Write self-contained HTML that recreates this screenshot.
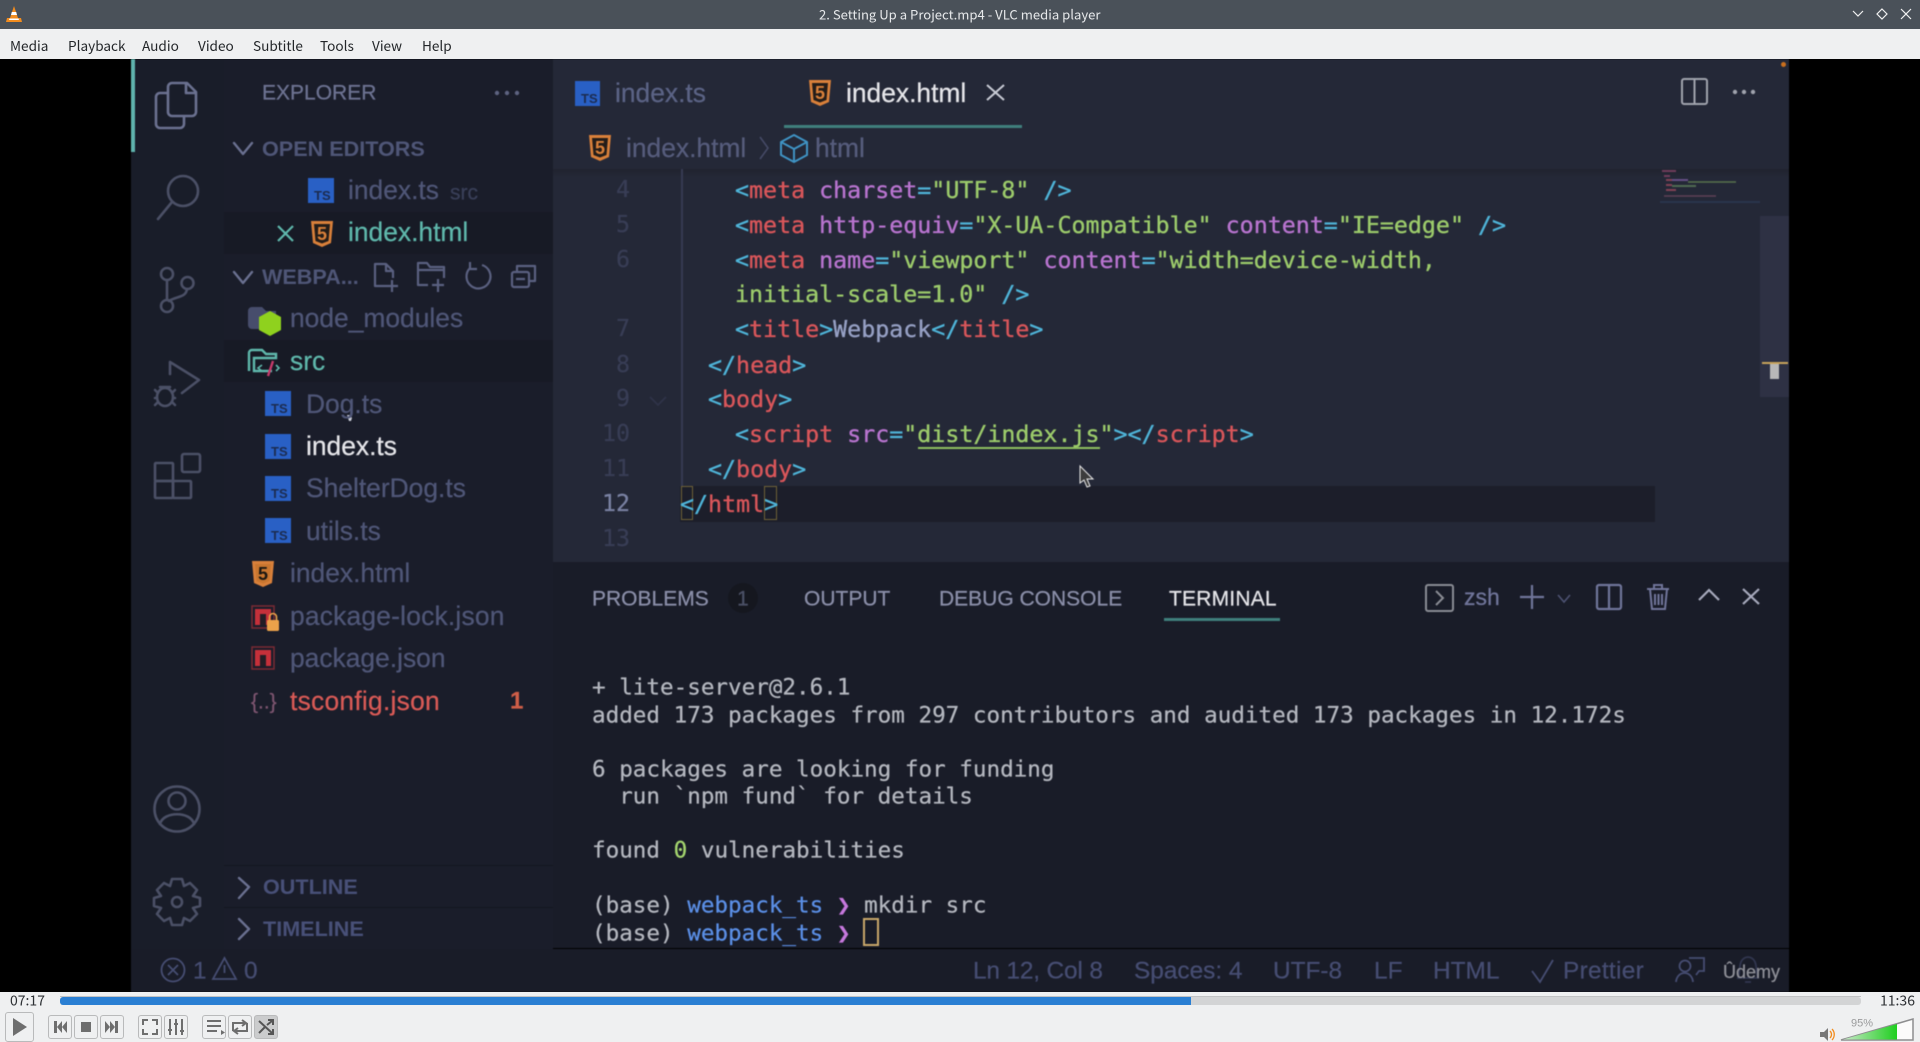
<!DOCTYPE html>
<html lang="en"><head><meta charset="utf-8"><title>2. Setting Up a Project.mp4 - VLC media player</title>
<style>
html,body{margin:0;padding:0;width:1920px;height:1042px;overflow:hidden;background:#eff0f1}
#v{position:absolute;left:0;top:59px;width:1920px;height:933px;background:#000;overflow:hidden}
#vi{position:absolute;left:0;top:-59px;width:1920px;height:1042px;filter:blur(.55px)}
.b{position:absolute}
svg{position:absolute;left:0;top:0}
.t{position:absolute;transform:translateY(-50%);white-space:pre;line-height:1.2;font-family:"Liberation Sans",sans-serif;color:#4f5677;font-size:26.4px;-webkit-text-stroke:.25px currentColor}
.h{font-size:21.6px;font-weight:bold;-webkit-text-stroke:0}
.c{font-family:"DejaVu Sans Mono","Liberation Mono",monospace;font-size:23.29px;color:#8fc46a;margin-top:.5px;-webkit-text-stroke:.35px currentColor}
.c span{-webkit-text-stroke:.35px currentColor}
.n{font-family:"DejaVu Sans Mono","Liberation Mono",monospace;font-size:23.3px;color:#383d55;text-align:right;width:60px}
.m{font-family:"DejaVu Sans Mono","Liberation Mono",monospace;font-size:22.6px;color:#b4b7bf;margin-top:1px}
.p{color:#4fb4d8}.r{color:#d9565a}.a{color:#b874cf}.s{color:#9ccb6b}.w{color:#96a0c4}
.pt{font-size:21px;color:#8a8ea8;margin-top:1px}
.st{font-size:24.4px;color:#464d72}
.u{position:absolute;transform:translateY(-50%);white-space:pre;line-height:1.2;font-family:"Noto Sans CJK JP","Liberation Sans",sans-serif;font-size:13.6px;color:#232629}
.btn{position:absolute;box-sizing:border-box;border:1px solid #b9babb;border-radius:3px;height:24px;width:24px;background:#eff0f1}
</style></head><body>
<div class="b" style="left:0;top:0;width:1920px;height:29px;background:#4a5159"></div>
<div class="b" style="left:0;top:29px;width:1920px;height:30px;background:#eff0f1"></div>

<div id="v"><div id="vi">
<div class="b" style="left:131px;top:59px;width:93px;height:933px;background:#191d29"></div>
<div class="b" style="left:224px;top:59px;width:329px;height:933px;background:#1a1d2a"></div>
<div class="b" style="left:553px;top:59px;width:1236px;height:503px;background:#242837"></div>
<div class="b" style="left:553px;top:562px;width:1236px;height:386px;background:#191c28"></div>
<div class="b" style="left:131px;top:949px;width:1658px;height:43px;background:#191c28"></div>
<div class="b" style="left:131px;top:59px;width:4px;height:93px;background:#5fb3ad"></div>
<div class="b" style="left:224px;top:212px;width:329px;height:42px;background:#171a25"></div>
<div class="b" style="left:224px;top:340px;width:329px;height:42px;background:#171a25"></div>
<div class="b" style="left:224px;top:865px;width:329px;height:1px;background:#14161f"></div>
<div class="b" style="left:224px;top:907px;width:329px;height:1px;background:#14161f"></div>
<div class="b" style="left:680px;top:486px;width:975px;height:36px;background:#1c1e2a"></div>
<div class="b" style="left:553px;top:169px;width:1236px;height:8px;background:linear-gradient(#20232f,#242837)"></div>
<div class="b" style="left:681px;top:169px;width:2px;height:317px;background:#363a52"></div>
<div class="b" style="left:681px;top:486px;width:12px;height:34px;box-sizing:border-box;border:1px solid #6e6136"></div>
<div class="b" style="left:764px;top:486px;width:13px;height:34px;box-sizing:border-box;border:1px solid #6e6136"></div>
<div class="b" style="left:918px;top:447px;width:182px;height:2px;background:#8fbf5f"></div>
<div class="b" style="left:784px;top:125px;width:238px;height:3px;background:#3f7f7c"></div>
<div class="b" style="left:1164px;top:618px;width:116px;height:3px;background:#3f7f7c"></div>
<div class="b" style="left:1760px;top:216px;width:29px;height:181px;background:#2e3144"></div>
<div class="b" style="left:1762px;top:362px;width:26px;height:2px;background:#c9a45a"></div>
<div class="b" style="left:1770px;top:364px;width:9px;height:15px;background:#b8b8b8"></div>
<div class="b" style="left:1781px;top:62px;width:5px;height:5px;border-radius:50%;background:#c96f1e"></div>

<svg width="1920" height="1042" viewBox="0 0 1920 1042" fill="none">
<!-- activity bar -->
<g stroke="#6b7190" stroke-width="2.6" stroke-linejoin="round">
<path d="M168 93H160a4 4 0 0 0-4 4V124a4 4 0 0 0 4 4H180a4 4 0 0 0 4-4V116"/>
<path d="M172 83H187L196 92V112a4 4 0 0 1-4 4H172a4 4 0 0 1-4-4V87a4 4 0 0 1 4-4Z"/>
<path d="M186 83V93H196"/>
</g>
<g stroke="#4b5066" stroke-width="2.6" stroke-linecap="round" stroke-linejoin="round">
<circle cx="183" cy="191" r="15"/><path d="M172 202L158 219"/>
<circle cx="167" cy="274" r="6"/><circle cx="187.5" cy="283" r="6"/><circle cx="167" cy="306" r="6"/>
<path d="M167 280V300M187 289C186 298 176 296 169 301"/>
<path d="M170 362L199 380L182 393M170 362V374"/>
<ellipse cx="165" cy="397" rx="8" ry="9"/>
<path d="M155 390L158 393M155 398H157M155 405L158 402M175 390L172 393M175 398H173M175 405L172 402M160 387L170 387"/>
<rect x="182" y="454" width="18" height="18" rx="2"/>
<rect x="155" y="463" width="18" height="18" rx="1"/>
<rect x="155" y="481" width="18" height="17" rx="1"/>
<rect x="173" y="481" width="18" height="17" rx="1"/>
<circle cx="177" cy="809" r="22.5"/><circle cx="177" cy="801" r="8.5"/>
<path d="M160 824C163 811 191 811 194 824"/>
<circle cx="177" cy="902" r="5"/>
<path d="M172 879H182L184 886L190 883L197 890L193 896L200 898V906L193 908L197 914L190 921L184 918L182 925H172L170 918L164 921L157 914L161 908L154 906V898L161 896L157 890L164 883L170 886Z"/>
</g>
<!-- sidebar chevrons -->
<g stroke="#6a7090" stroke-width="2.4" stroke-linecap="round" stroke-linejoin="round">
<path d="M234 143L243 154L252 143M234 272L243 283L252 272"/>
<path d="M239 878L249 887L239 898M239 919L249 929L239 939"/>
</g>
<g fill="#5d6380"><circle cx="497" cy="93" r="2.2"/><circle cx="507" cy="93" r="2.2"/><circle cx="517" cy="93" r="2.2"/></g>
<!-- selected close -->
<path d="M278 226L293 241M293 226L278 241" stroke="#5fb8ac" stroke-width="2.2"/>
<!-- explorer actions -->
<g stroke="#5a6080" stroke-width="2.2" stroke-linejoin="round">
<path d="M386 286H375V264H386L393 271V278M386 264V271H393"/><path d="M392 280V292M386 286H398"/>
<path d="M428 285H418V263H427L430 267H444V278M418 270H444"/><path d="M438 279V292M432 285H444"/>
<path d="M482 265A12 12 0 1 1 470 268M470 262V269H477"/>
<rect x="512" y="272" width="17" height="15" rx="2"/><path d="M517 272V266H535V281H529M516 279H525"/>
</g>
<!-- TS icons -->
<g font-family="Liberation Sans,sans-serif" font-weight="bold" font-size="13" fill="#1c2c50">
<rect x="308" y="178" width="26" height="25" fill="#2960c5"/><text x="314" y="200">TS</text>
<rect x="265" y="391" width="26" height="25" fill="#2960c5"/><text x="271" y="413">TS</text>
<rect x="265" y="434" width="26" height="25" fill="#2960c5"/><text x="271" y="456">TS</text>
<rect x="265" y="476" width="26" height="25" fill="#2960c5"/><text x="271" y="498">TS</text>
<rect x="265" y="518" width="26" height="25" fill="#2960c5"/><text x="271" y="540">TS</text>
<rect x="575" y="81" width="25" height="25" fill="#2960c5"/><text x="581" y="103">TS</text>
</g>
<!-- html5 icons -->
<g font-family="Liberation Sans,sans-serif" font-weight="bold" font-size="18" fill="#1a1712">
<path d="M311 221H333L331 243L322 247L313 243Z" fill="#d9803a"/><path d="M314 224H330L328.500 241L322 243.500L315.500 241Z" fill="#241d19"/><text x="317" y="240" fill="#d9803a">5</text>
<path d="M252 561H274L272 583L263 587L254 583Z" fill="#d9803a"/><path d="M255 564H271L269.500 581L263 583.500L256.500 581Z" fill="#c9762f"/><text x="258" y="580">5</text>
<path d="M809 80H831L829 102L820 106L811 102Z" fill="#d9803a"/><path d="M812 83H828L826.500 100L820 102.500L813.500 100Z" fill="#241d19"/><text x="815" y="99" fill="#d9803a">5</text>
<path d="M589 135H611L609 157L600 161L591 157Z" fill="#d9803a"/><path d="M592 138H608L606.500 155L600 157.500L593.500 155Z" fill="#241d19"/><text x="595" y="154" fill="#d9803a">5</text>
</g>
<!-- folders -->
<path d="M248 311a4 4 0 0 1 4-4H262L266 311H276V329H252a4 4 0 0 1-4-4Z" fill="#474d6c"/>
<path d="M270 311L281 317V330L270 336L259 330V317Z" fill="#8fd11e"/>
<path d="M249 371V353a3 3 0 0 1 3-3H262L266 354H276V358H254V371H272" stroke="#5fb8ac" stroke-width="2.4"/>
<path d="M262 365L258 368L262 371M276 365L279 368L276 371" stroke="#5fb8ac" stroke-width="1.6"/>
<path d="M273 361L268 376" stroke="#c73b6b" stroke-width="2.4"/>
<!-- npm -->
<rect x="252" y="606" width="22" height="22" stroke="#7a2a33" stroke-width="1.5"/><rect x="255" y="609" width="16" height="16" fill="#c6303a"/><rect x="260" y="614" width="6" height="11" fill="#241d25"/>
<rect x="267" y="620" width="12" height="11" rx="1.5" fill="#eba24a"/><path d="M269.500 620V617a3.500 3.500 0 0 1 7 0V620" stroke="#eba24a" stroke-width="1.6"/>
<rect x="252" y="647" width="22" height="22" stroke="#7a2a33" stroke-width="1.5"/><rect x="255" y="650" width="16" height="16" fill="#c6303a"/><rect x="260" y="655" width="6" height="11" fill="#241d25"/>
<!-- editor actions -->
<rect x="1682" y="79" width="25" height="25" rx="2" stroke="#a0a3ad" stroke-width="2"/><path d="M1694.500 79V104" stroke="#a0a3ad" stroke-width="2"/>
<g fill="#a0a3ad"><circle cx="1735" cy="92" r="2.2"/><circle cx="1744" cy="92" r="2.2"/><circle cx="1753" cy="92" r="2.2"/></g>
<path d="M987 85L1004 100M1004 85L987 100" stroke="#c9ccd6" stroke-width="2"/>
<path d="M760 137L768 148L760 159" stroke="#454a66" stroke-width="1.6"/>
<g stroke="#3f93c4" stroke-width="2" stroke-linejoin="round"><path d="M794 135L807 142V155L794 162L781 155V142Z"/><path d="M781 142L794 149L807 142M794 149V162"/></g>
<!-- folding chevron -->
<path d="M650 397L658 405L666 397" stroke="#2f3349" stroke-width="1.6"/>
<!-- mouse cursor -->
<path d="M1080 466V483L1084 480L1087 487L1090 486L1087 479L1093 479Z" fill="#3c3c3c" stroke="#e8e8e8" stroke-width="1"/>
<path d="M1031 415l3 0 2 3 -1 3 -2 0Z" fill="#c9ccd6" transform="translate(-684 0)"/>
<!-- minimap -->
<g stroke-width="2" opacity=".75">
<path d="M1662 171H1676M1664 176H1670" stroke="#8a4468"/>
<path d="M1666 180H1672M1666 185H1672M1666 190H1676" stroke="#a04a60"/>
<path d="M1672 180H1688" stroke="#7a5aa0"/><path d="M1688 182H1736" stroke="#6a8a55" stroke-width="1.4"/><path d="M1672 186H1696" stroke="#5f7f5a"/>
<path d="M1664 196H1716" stroke="#704860" stroke-width="1.4"/>
<path d="M1660 202H1760" stroke="#2c3a55"/>
</g>
<!-- terminal toolbar -->
<rect x="1426" y="585" width="27" height="26" rx="2" stroke="#8a8c94" stroke-width="2"/><path d="M1436 591L1443 598L1436 605" stroke="#8a8c94" stroke-width="2"/>
<g stroke="#70759a" stroke-width="2.2">
<path d="M1532 585V609M1520 597H1544"/>
<path d="M1558 595L1564 602L1570 595" stroke-width="1.6" stroke="#4d5272"/>
<rect x="1597" y="585" width="24" height="24" rx="2"/><path d="M1609 585V609"/>
<path d="M1647 589H1669M1654 589V585H1662V589M1650 589L1652 609H1665L1667 589M1655 594V605M1658.500 594V605M1662 594V605" stroke-width="2"/>
</g>
<path d="M1699 600L1709 590L1719 600M1743 589L1759 604M1759 589L1743 604" stroke="#a7aabd" stroke-width="2.2"/>
<!-- terminal cursor -->
<rect x="864" y="919" width="14" height="26" stroke="#c9a86a" stroke-width="2"/>
<circle cx="743" cy="598" r="15" fill="#15171f"/>
<!-- status -->
<g stroke="#464d72" stroke-width="1.8">
<circle cx="173" cy="970" r="11.5"/><path d="M168 965L178 975M178 965L168 975"/>
<path d="M224.500 958L236 979H213Z"/><path d="M224.500 965V973"/>
<path d="M1532 971L1540 982L1553 960"/>
<circle cx="1685" cy="966" r="5.500"/><path d="M1676 982C1677 970 1692 970 1693 982M1689 958H1704V971H1699L1696 975"/>
<path d="M1738 978C1741 972 1737 958 1748 957C1759 958 1755 972 1758 978ZM1745 982H1751" stroke="#31364f"/>
</g>
</svg>

<!-- sidebar text -->
<div class="t" style="left:262px;top:93px;font-size:21px;color:#6c7291">EXPLORER</div>
<div class="t h" style="left:262px;top:149px">OPEN EDITORS</div>
<div class="t" style="left:348px;top:191px">index.ts</div>
<div class="t" style="left:450px;top:193px;font-size:21px;color:#393f58">src</div>
<div class="t" style="left:348px;top:233px;color:#5fb8ac">index.html</div>
<div class="t h" style="left:262px;top:277px">WEBPA...</div>
<div class="t" style="left:290px;top:319px">node_modules</div>
<div class="t" style="left:290px;top:362px;color:#5fb8ac">src</div>
<div class="t" style="left:306px;top:405px">Dog.ts</div>
<div class="t" style="left:306px;top:447px;color:#e6e6ea">index.ts</div>
<div class="t" style="left:306px;top:489px">ShelterDog.ts</div>
<div class="t" style="left:306px;top:532px">utils.ts</div>
<div class="t" style="left:290px;top:574px">index.html</div>
<div class="t" style="left:290px;top:617px;letter-spacing:.2px">package-lock.json</div>
<div class="t" style="left:290px;top:659px">package.json</div>
<div class="t" style="left:251px;top:702px;font-size:21px;color:#7d5570">{..}</div>
<div class="t" style="left:290px;top:702px;color:#d95a56;letter-spacing:.25px">tsconfig.json</div>
<div class="t" style="left:510px;top:702px;color:#cf5e48;font-weight:bold;font-size:24px">1</div>
<div class="t h" style="left:263px;top:887px;color:#485078">OUTLINE</div>
<div class="t h" style="left:263px;top:929px;color:#485078">TIMELINE</div>
<!-- tabs -->
<div class="t" style="left:615px;top:94px;color:#5b6385">index.ts</div>
<div class="t" style="left:846px;top:94px;color:#e6e6ea">index.html</div>
<div class="t" style="left:626px;top:149px;color:#565c7c">index.html</div>
<div class="t" style="left:815px;top:149px;color:#565c7c">html</div>
<!-- code -->
<div class="t n" style="left:570px;top:190px">4</div>
<div class="t n" style="left:570px;top:225px">5</div>
<div class="t n" style="left:570px;top:260px">6</div>
<div class="t n" style="left:570px;top:329px">7</div>
<div class="t n" style="left:570px;top:365px">8</div>
<div class="t n" style="left:570px;top:399px">9</div>
<div class="t n" style="left:570px;top:434px">10</div>
<div class="t n" style="left:570px;top:469px">11</div>
<div class="t n" style="left:570px;top:504px;color:#7a82a3">12</div>
<div class="t n" style="left:570px;top:539px">13</div>
<div class="t c" style="left:735px;top:190px"><span class="p">&lt;</span><span class="r">meta</span> <span class="a">charset</span><span class="p">=</span><span class="s">"UTF-8"</span> <span class="p">/&gt;</span></div>
<div class="t c" style="left:735px;top:225px"><span class="p">&lt;</span><span class="r">meta</span> <span class="a">http-equiv</span><span class="p">=</span><span class="s">"X-UA-Compatible"</span> <span class="a">content</span><span class="p">=</span><span class="s">"IE=edge"</span> <span class="p">/&gt;</span></div>
<div class="t c" style="left:735px;top:260px"><span class="p">&lt;</span><span class="r">meta</span> <span class="a">name</span><span class="p">=</span><span class="s">"viewport"</span> <span class="a">content</span><span class="p">=</span><span class="s">"width=device-width,</span></div>
<div class="t c" style="left:735px;top:294px"><span class="s">initial-scale=1.0"</span> <span class="p">/&gt;</span></div>
<div class="t c" style="left:735px;top:329px"><span class="p">&lt;</span><span class="r">title</span><span class="p">&gt;</span><span class="w">Webpack</span><span class="p">&lt;/</span><span class="r">title</span><span class="p">&gt;</span></div>
<div class="t c" style="left:708px;top:365px"><span class="p">&lt;/</span><span class="r">head</span><span class="p">&gt;</span></div>
<div class="t c" style="left:708px;top:399px"><span class="p">&lt;</span><span class="r">body</span><span class="p">&gt;</span></div>
<div class="t c" style="left:735px;top:434px"><span class="p">&lt;</span><span class="r">script</span> <span class="a">src</span><span class="p">=</span><span class="s">"dist/index.js"</span><span class="p">&gt;&lt;/</span><span class="r">script</span><span class="p">&gt;</span></div>
<div class="t c" style="left:708px;top:469px"><span class="p">&lt;/</span><span class="r">body</span><span class="p">&gt;</span></div>
<div class="t c" style="left:680px;top:504px"><span class="p">&lt;/</span><span class="r">html</span><span class="p">&gt;</span></div>
<!-- panel -->
<div class="t pt" style="left:592px;top:598px">PROBLEMS</div>
<div class="t pt" style="left:737px;top:598px;color:#4b5066">1</div>
<div class="t pt" style="left:804px;top:598px">OUTPUT</div>
<div class="t pt" style="left:939px;top:598px">DEBUG CONSOLE</div>
<div class="t pt" style="left:1169px;top:598px;color:#e4e4e8;letter-spacing:.2px">TERMINAL</div>
<div class="t" style="left:1464px;top:598px;font-size:23px;color:#70759a">zsh</div>
<!-- terminal -->
<div class="t m" style="left:592px;top:687px">+ lite-server@2.6.1</div>
<div class="t m" style="left:592px;top:715px">added 173 packages from 297 contributors and audited 173 packages in 12.172s</div>
<div class="t m" style="left:592px;top:769px">6 packages are looking for funding</div>
<div class="t m" style="left:592px;top:796px">  run `npm fund` for details</div>
<div class="t m" style="left:592px;top:850px">found <span style="color:#a5d66f">0</span> vulnerabilities</div>
<div class="t m" style="left:592px;top:905px">(base) <span style="color:#5b8fe6">webpack_ts</span> <span style="color:#c678dd">❯</span> mkdir src</div>
<div class="t m" style="left:592px;top:933px">(base) <span style="color:#5b8fe6">webpack_ts</span> <span style="color:#c678dd">❯</span></div>
<!-- status -->
<div class="t st" style="left:193px;top:971px">1</div>
<div class="t st" style="left:244px;top:971px">0</div>
<div class="t st" style="left:973px;top:971px;letter-spacing:-.15px">Ln 12, Col 8</div>
<div class="t st" style="left:1134px;top:971px">Spaces: 4</div>
<div class="t st" style="left:1273px;top:971px">UTF-8</div>
<div class="t st" style="left:1374px;top:971px">LF</div>
<div class="t st" style="left:1433px;top:971px">HTML</div>
<div class="t st" style="left:1563px;top:971px;letter-spacing:.3px">Prettier</div>
<div class="t" style="left:1723px;top:973px;font-size:18px;color:#8f9098">Ûdemy</div>
</div></div>

<!-- VLC chrome -->
<svg width="1920" height="1042" viewBox="0 0 1920 1042" fill="none" style="pointer-events:none">
<path d="M14 6L10 18H18Z" fill="#f28c1e"/><path d="M10 18H7L6 22H22L21 18H18Z" fill="#f28c1e"/><path d="M11.800 12H16.200L17 15H11Z" fill="#fff"/><path d="M9.500 18.500H18.500L19 20H9Z" fill="#fff"/>
<path d="M1853 11L1858 16L1863 11M1882 9L1887 14L1882 19L1877 14ZM1901 9L1911 19M1911 9L1901 19" stroke="#f0f0f0" stroke-width="1.200"/>
<rect x="60" y="997" width="1801" height="8" rx="3" fill="#d3d4d5"/>
<path d="M60 1000a3 3 0 0 1 3-3H1191V1005H63a3 3 0 0 1-3-3Z" fill="#2a7fd3"/>
<rect x="60" y="996" width="1801" height="1" fill="#c2c3c4"/>
</svg>
<div class="t" style="left:819px;top:14px;font:13.100px 'Noto Sans CJK JP','Liberation Sans',sans-serif;color:#e6e8ea;-webkit-text-stroke:0">2. Setting Up a Project.mp4 - VLC media player</div>
<div class="u" style="left:10px;top:45px">Media</div>
<div class="u" style="left:68px;top:45px">Playback</div>
<div class="u" style="left:142px;top:45px">Audio</div>
<div class="u" style="left:198px;top:45px">Video</div>
<div class="u" style="left:253px;top:45px">Subtitle</div>
<div class="u" style="left:320px;top:45px">Tools</div>
<div class="u" style="left:372px;top:45px">View</div>
<div class="u" style="left:422px;top:45px">Help</div>
<div class="u" style="left:10px;top:1001px;color:#2c2f33;font-size:14px">07:17</div>
<div class="u" style="left:1880px;top:1001px;color:#2c2f33;font-size:14px">11:36</div>
<div class="btn" style="left:5px;top:1012px;width:29px;height:30px"></div>
<div class="btn" style="left:48px;top:1015px"></div>
<div class="btn" style="left:74px;top:1015px"></div>
<div class="btn" style="left:100px;top:1015px"></div>
<div class="btn" style="left:138px;top:1015px"></div>
<div class="btn" style="left:164px;top:1015px"></div>
<div class="btn" style="left:202px;top:1015px"></div>
<div class="btn" style="left:228px;top:1015px"></div>
<div class="btn" style="left:254px;top:1015px;background:#cbcccd"></div>
<svg width="1920" height="1042" viewBox="0 0 1920 1042" fill="none" style="pointer-events:none">
<path d="M13 1018V1036L27 1027Z" fill="#6e6e6e"/>
<g fill="#6e6e6e">
<path d="M54 1021H57V1033H54ZM57 1027L62 1021V1033ZM62 1027L67 1021V1033Z"/>
<rect x="81" y="1022" width="10" height="10"/>
<path d="M105 1021L110 1027V1021L115 1027V1021H118V1033H115V1027L110 1033V1027L105 1033Z"/>
</g>
<g stroke="#6e6e6e" stroke-width="2">
<path d="M143 1025V1020H148M152 1020H157V1025M157 1029V1034H152M148 1034H143V1029"/>
<path d="M170 1019V1035M176 1019V1035M182 1019V1035M168 1030H172M174 1024H178M180 1031H184"/>
<path d="M207 1021H221M207 1026H221M207 1031H217"/>
<path d="M233 1031V1023H245M242 1020L246 1023L242 1026M247 1023V1031H235M238 1028L234 1031L238 1034"/>
<path d="M259 1021L272 1033M259 1033L265 1027M267 1025L272 1021M268 1020H273V1025M268 1034H273V1029" stroke="#555"/>
</g>
<path d="M221 1030L225 1032.500L221 1035Z" fill="#6e6e6e"/>
<path d="M1820 1032H1824L1828 1028V1041L1824 1037H1820Z" fill="#777"/>
<path d="M1830 1031C1832 1033 1832 1036 1830 1038M1832 1029C1835 1032 1835 1037 1832 1040" stroke="#f28c1e" stroke-width="1.300"/>
<path d="M1841 1040L1913 1019V1040Z" fill="#fbfbfb" stroke="#8d8e8f" stroke-width="1.500"/>
<defs><linearGradient id="g" x1="0" x2="1" y1="0" y2="0"><stop offset="0" stop-color="#c9e8c9"/><stop offset="1" stop-color="#1fcf1f"/></linearGradient></defs>
<path d="M1843 1039.500L1897 1024V1039.500Z" fill="url(#g)"/>
</svg>
<div class="t" style="left:1851px;top:1024px;font-size:11px;color:#9a9b9c;-webkit-text-stroke:0">95%</div>
</body></html>
